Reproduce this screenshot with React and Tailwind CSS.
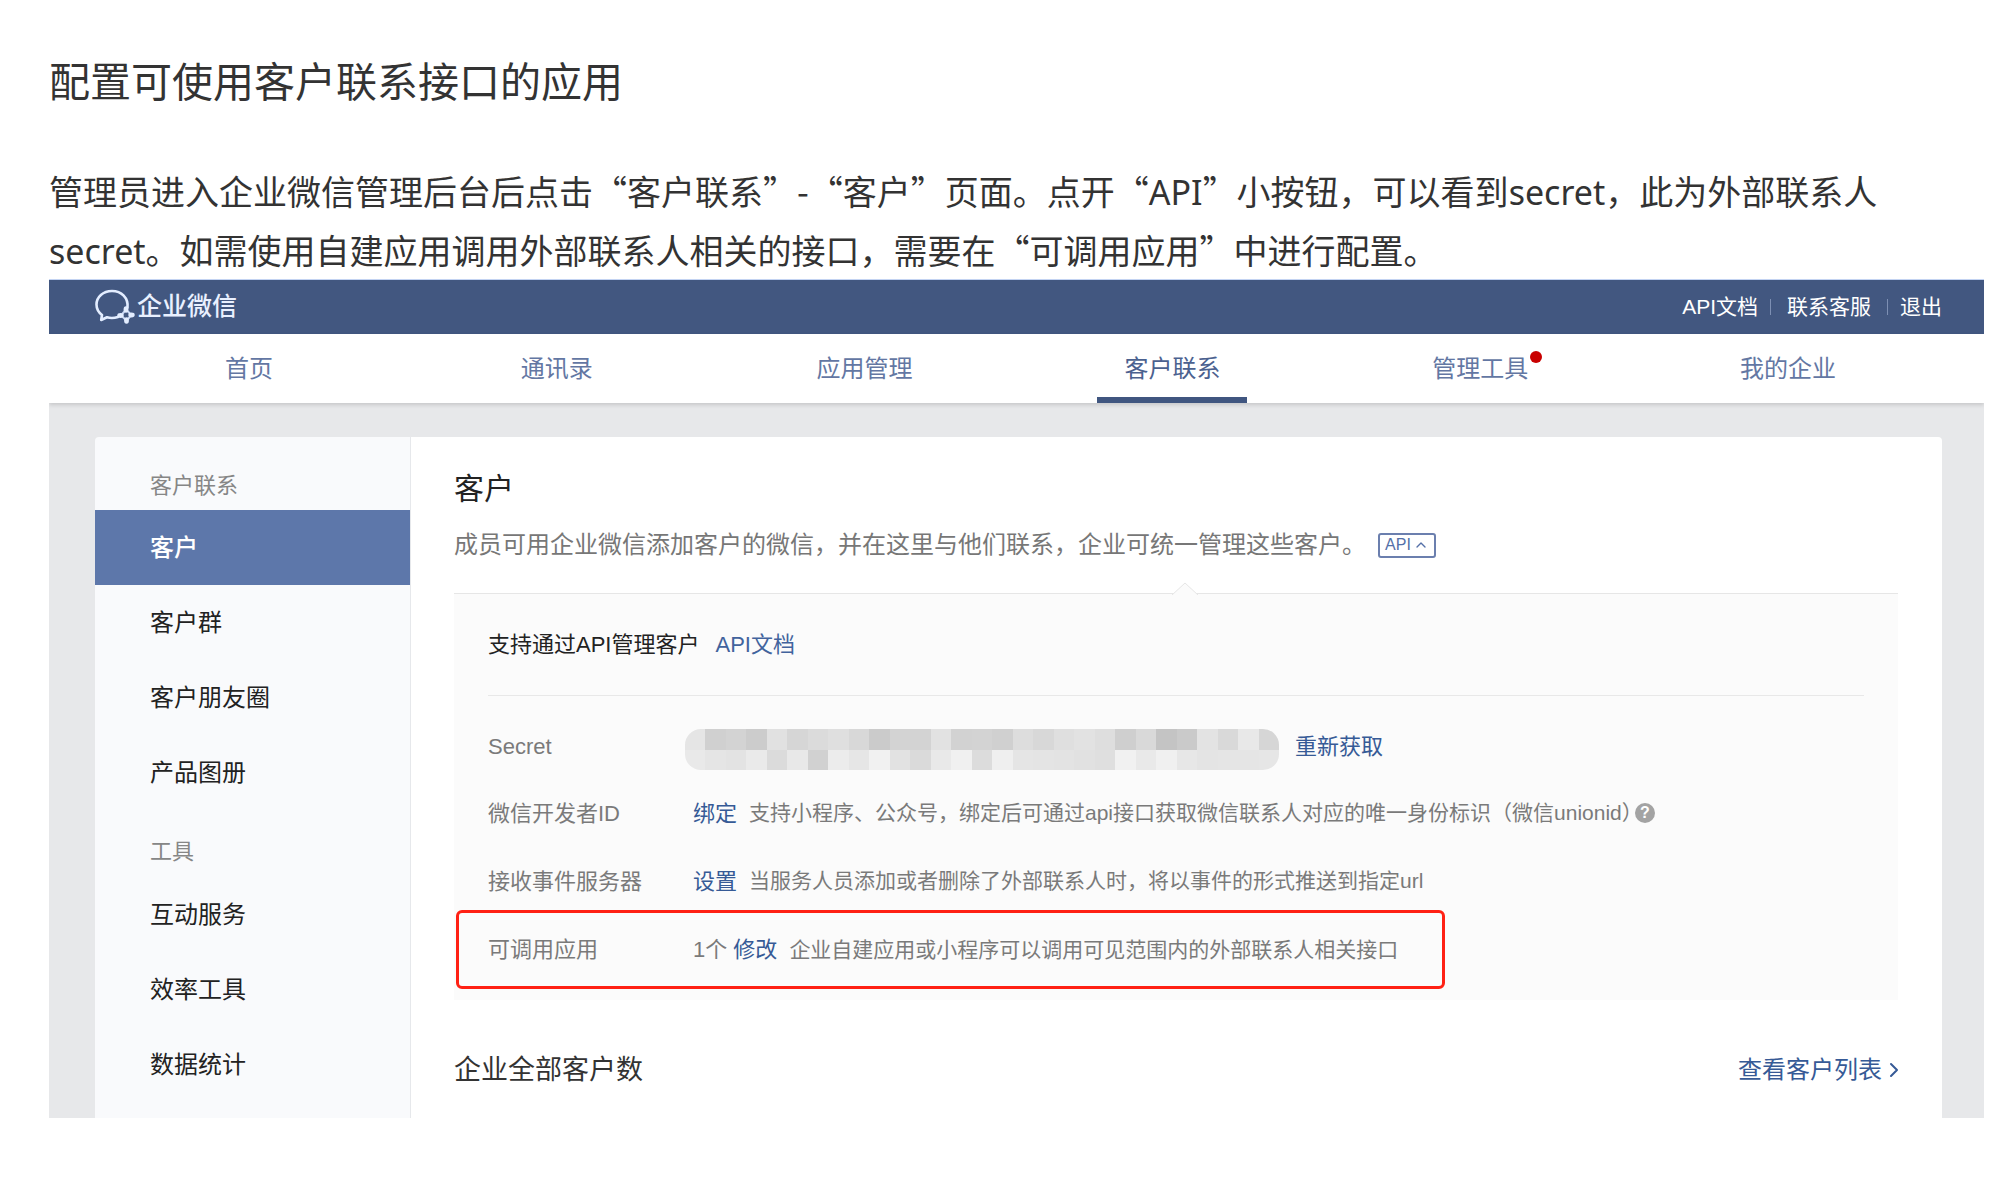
import React from 'react';
import { ChevronRight, ChevronUp } from 'lucide-react';

const tabs = [
  { label: '首页' },
  { label: '通讯录' },
  { label: '应用管理' },
  { label: '客户联系', active: true },
  { label: '管理工具', dot: true },
  { label: '我的企业' }
];

const menu = [
  {
    title: '客户联系',
    titleClass: 'h-[73px] pt-6',
    items: ['客户', '客户群', '客户朋友圈', '产品图册']
  },
  {
    title: '工具',
    titleClass: 'h-[67px] pt-4',
    items: ['互动服务', '效率工具', '数据统计']
  }
];

// grey levels of the masked secret, one entry per mosaic cell
const maskTop = [
  229, 208, 211, 204, 225, 214, 219, 223, 216, 203, 211, 211, 226, 210, 211,
  208, 221, 216, 223, 226, 222, 207, 217, 196, 202, 227, 217, 232, 214
];
const maskBottom = [
  233, 229, 227, 234, 219, 232, 209, 236, 230, 241, 226, 218, 233, 240, 220,
  239, 229, 228, 227, 225, 223, 241, 233, 240, 231, 228, 229, 229, 230
];

const Latin = ({ children }) => (
  <span className="leading-none font-['Noto_Sans','Noto_Sans_CJK_SC',sans-serif]">
    {children}
  </span>
);

const Logo = () => (
  <svg className="h-9 w-10" viewBox="0 0 40 36" fill="none" aria-hidden="true">
    <path
      d="M32.5 18.5 C33.5 9 26.5 2 17 2 C8 2 1.5 8 1.5 15.5 C1.5 20 3.7 23.5 7 26 L6.2 31 L12 28.3 C15.5 29.3 19 29.2 23 28"
      stroke="#e3edff"
      strokeWidth="2.6"
      strokeLinecap="round"
      strokeLinejoin="round"
    />
    <path d="M31 20.500 L36.500 26 L31.500 31.500 L26 26.500 Z" stroke="#c9d8f5" strokeWidth="2" />
    <g fill="#e3edff">
      <ellipse cx="31" cy="20.500" rx="2.400" ry="3.200" />
      <ellipse cx="36.500" cy="26" rx="3.200" ry="2.400" />
      <ellipse cx="31.500" cy="31.500" rx="2.400" ry="3.200" />
      <ellipse cx="25.500" cy="26.500" rx="3.200" ry="2.400" />
    </g>
  </svg>
);

const Mosaic = () => (
  <svg
    className="h-[41px] w-[594px] rounded-2xl"
    viewBox="0 0 29 2"
    preserveAspectRatio="none"
    shapeRendering="crispEdges"
    role="img"
    aria-label="Secret"
  >
    {[maskTop, maskBottom].map((row, y) =>
      row.map((v, x) => (
        <rect
          key={`${x}-${y}`}
          x={x}
          y={y}
          width="1"
          height="1"
          fill={`rgb(${v},${v},${v})`}
        />
      ))
    )}
  </svg>
);

const Action = ({ children }) => (
  <button type="button" className="text-[22px] text-[#365a96]">
    {children}
  </button>
);

const Row = ({ label, children }) => (
  <div className="flex h-[68px] items-center">
    <div className="w-[205px] shrink-0">{label}</div>
    <div className="flex items-center gap-3">{children}</div>
  </div>
);

const Header = () => (
  <header className="flex h-[55px] items-center justify-between border-t border-[#c3d3f2] bg-[#425780] pr-[42px] pl-[46px] text-white">
    <a
      href="#home"
      className="flex items-center gap-0.5 text-[25px] font-medium text-[#e9f0ff]"
    >
      <Logo />
      企业微信
    </a>
    <div className="flex items-center text-[21px]">
      <a href="#docs">API文档</a>
      <span className="mr-4 ml-3 h-4 w-px bg-[#7d8fb3]" />
      <a href="#support">联系客服</a>
      <span className="mr-3 ml-4 h-4 w-px bg-[#7d8fb3]" />
      <a href="#logout">退出</a>
    </div>
  </header>
);

const Tabs = () => (
  <nav className="relative grid h-[69px] grid-cols-6 bg-white pr-[42px] pl-[46px] text-2xl text-[#6377a3] shadow-[0_2px_4px_rgba(0,0,0,0.14)]">
    {tabs.map((tab) => (
      <a
        key={tab.label}
        href="#tab"
        className={
          tab.active
            ? 'flex w-[150px] items-center justify-center justify-self-center border-b-6 border-[#405680] pt-1.5 text-[#4b618f]'
            : 'flex items-center justify-center'
        }
      >
        <span className="relative">
          {tab.label}
          {tab.dot && (
            <span className="absolute -top-0.5 -right-3.5 size-3 rounded-full bg-[#c90000]" />
          )}
        </span>
      </a>
    ))}
  </nav>
);

const Sidebar = () => (
  <aside className="w-[316px] shrink-0 rounded-tl border-r border-[#e6e8eb] bg-[#f9fafc]">
    {menu.map((group) => (
      <section key={group.title}>
        <h3
          className={`flex items-center pl-[55px] text-[22px] text-[#868686] ${group.titleClass}`}
        >
          {group.title}
        </h3>
        {group.items.map((item) => (
          <a
            key={item}
            href="#menu"
            className={
              item === '客户'
                ? 'flex h-[75px] items-center bg-[#5d77aa] pl-[55px] text-2xl font-medium text-white'
                : 'flex h-[75px] items-center pl-[55px] text-2xl text-[#222]'
            }
          >
            {item}
          </a>
        ))}
      </section>
    ))}
  </aside>
);

const ApiPanel = () => (
  <section className="relative mt-8 border-t border-[#e6e6e6] bg-[#fbfbfb] px-[34px] pb-[11px] text-[22px] text-[#7a7a7a]">
    <svg
      className="absolute -top-3 left-[718px] h-[13px] w-[26px]"
      viewBox="0 0 26 13"
      fill="#fbfbfb"
      aria-hidden="true"
    >
      <path d="M0 13 L13 1 L26 13" stroke="#e6e6e6" />
    </svg>
    <div className="flex h-[102px] items-center gap-4 border-b border-[#e8e8e8]">
      <h3 className="text-[#222]">支持通过API管理客户</h3>
      <a href="#docs" className="text-[#42639d]">
        API文档
      </a>
    </div>
    <div className="mt-[33px] mb-[9px] flex h-[41px] items-start leading-9">
      <div className="w-[197px] shrink-0">Secret</div>
      <Mosaic />
      <div className="ml-4 flex">
        <Action>重新获取</Action>
      </div>
    </div>
    <Row label="微信开发者ID">
      <Action>绑定</Action>
      <span className="text-[21px]">
        支持小程序、公众号，绑定后可通过api接口获取微信联系人对应的唯一身份标识（微信unionid）
      </span>
      <button
        type="button"
        aria-label="帮助"
        className="-ml-5 flex size-5 items-center justify-center rounded-full bg-[#a3a3a3] text-base font-bold text-white"
      >
        ?
      </button>
    </Row>
    <Row label="接收事件服务器">
      <Action>设置</Action>
      <span className="text-[21px]">
        当服务人员添加或者删除了外部联系人时，将以事件的形式推送到指定url
      </span>
    </Row>
    <div className="-mt-[5px] -ml-8 flex h-[79px] w-fit flex-col justify-center rounded-md border-3 border-[#ff2114] pr-11 pl-[29px]">
      <Row label="可调用应用">
        <span>
          1个 <Action>修改</Action>
        </span>
        <span className="text-[21px]">
          企业自建应用或小程序可以调用可见范围内的外部联系人相关接口
        </span>
      </Row>
    </div>
  </section>
);

const Customers = () => (
  <main className="min-w-0 flex-1 rounded-tr bg-white pt-8 pr-[44px] pb-7 pl-[43px]">
    <h2 className="text-[30px] leading-10 text-[#222]">客户</h2>
    <div className="mt-5 flex h-8 items-center gap-3">
      <p className="text-2xl text-[#777]">
        成员可用企业微信添加客户的微信，并在这里与他们联系，企业可统一管理这些客户。
      </p>
      <button
        type="button"
        className="flex h-[25px] w-[58px] items-center justify-center gap-0.5 rounded-[3px] border-2 border-[#6b7fae] text-base text-[#5470a8]"
      >
        API
        <ChevronUp className="size-4" />
      </button>
    </div>
    <ApiPanel />
    <div className="mt-[50px] flex h-10 items-center justify-between">
      <h3 className="text-[27px] text-[#333]">企业全部客户数</h3>
      <a href="#list" className="flex items-center text-2xl text-[#365a96]">
        查看客户列表
        <ChevronRight className="-mr-2 size-6" />
      </a>
    </div>
  </main>
);

const App = () => (
  <div className="min-h-screen bg-white pt-[49px] pr-8 pb-16 pl-[49px] font-['Liberation_Sans','Noto_Sans_CJK_SC',sans-serif]">
    <article className="font-['Noto_Sans_CJK_SC',sans-serif] text-[#333]">
      <h1 className="text-[41px] leading-[60px]">配置可使用客户联系接口的应用</h1>
      <p className="mt-[52px] text-[34px] leading-[59px]">
        管理员进入企业微信管理后台后点击“客户联系”-“客户”页面。点开“
        <Latin>API</Latin>”小按钮，可以看到<Latin>secret</Latin>
        ，此为外部联系人<Latin>secret</Latin>
        。如需使用自建应用调用外部联系人相关的接口，需要在“可调用应用”中进行配置。
      </p>
    </article>
    <div className="overflow-hidden bg-[#e7e8ea]">
      <Header />
      <Tabs />
      <div className="flex pt-[34px] pr-[42px] pl-[46px]">
        <Sidebar />
        <Customers />
      </div>
    </div>
  </div>
);

export default App;
